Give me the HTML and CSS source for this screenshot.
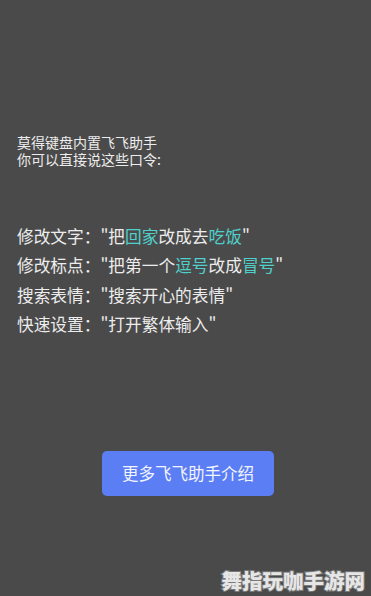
FILE: index.html
```html
<!DOCTYPE html>
<html lang="zh">
<head>
<meta charset="utf-8">
<link rel="stylesheet" href="styles.css">
</head>
<body>
<div class="page">
  <p class="intro">莫得键盘内置飞飞助手<br>你可以直接说这些口令:</p>
  <div class="commands">
    <div>修改文字："把<span class="hl">回家</span>改成去<span class="hl">吃饭</span>"</div>
    <div>修改标点："把第一个<span class="hl">逗号</span>改成<span class="hl">冒号</span>"</div>
    <div>搜索表情："搜索开心的表情"</div>
    <div>快速设置："打开繁体输入"</div>
  </div>
  <div class="actions">
    <button class="more">更多飞飞助手介绍</button>
  </div>
  <div class="watermark">舞指玩咖手游网</div>
</div>
</body>
</html>
```
FILE: styles.css
```css
html, body {
  margin: 0;
  padding: 0;
  background: #4a4a4a;
}
.page {
  position: relative;
  width: 371px;
  height: 596px;
  overflow: hidden;
  font-family: "Noto Sans CJK SC", "Noto Sans", sans-serif;
  color: #ededed;
  padding: 134px 0 0 17px;
  box-sizing: border-box;
}
.intro {
  margin: 0;
  font-size: 14px;
  line-height: 17px;
}
.commands {
  margin-top: 54px;
  font-size: 16.7px;
  line-height: 29.4px;
}
.hl {
  color: #50d0ca;
}
.actions {
  margin-top: 111px;
  padding-left: 85px;
}
.more {
  width: 172px;
  height: 45px;
  border: 0;
  border-radius: 5px;
  background: #5b7ef4;
  color: #f2f4ff;
  font-family: "Noto Sans CJK SC", "Noto Sans", sans-serif;
  font-size: 16.5px;
  padding: 0;
}
.watermark {
  position: absolute;
  right: 6px;
  bottom: 5px;
  font-size: 20.5px;
  font-weight: 900;
  line-height: 22px;
  color: #e6e6e6;
  -webkit-text-stroke: 2px #7a7a7a;
  paint-order: stroke fill;
}
```
